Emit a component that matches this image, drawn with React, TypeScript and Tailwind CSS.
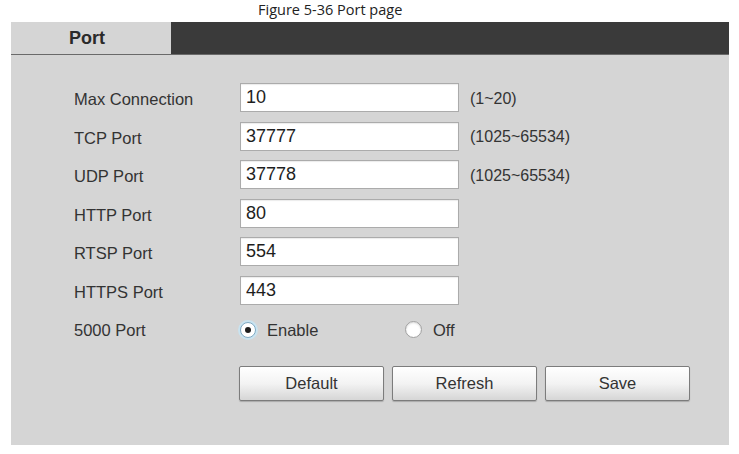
import React from "react";

type Row = { label: string; value: string; hint?: string };

const rows: Row[] = [
  { label: "Max Connection", value: "10", hint: "(1~20)" },
  { label: "TCP Port", value: "37777", hint: "(1025~65534)" },
  { label: "UDP Port", value: "37778", hint: "(1025~65534)" },
  { label: "HTTP Port", value: "80" },
  { label: "RTSP Port", value: "554" },
  { label: "HTTPS Port", value: "443" },
];

const Radio = ({ checked, label }: { checked?: boolean; label: string }) => (
  <div className="flex items-center">
    {checked ? (
      <span className="w-[16px] h-[16px] rounded-full border border-[#7fa9c2] bg-white shadow-[0_0_0_2px_#c9e3f0] flex items-center justify-center">
        <span className="w-[6px] h-[6px] rounded-full bg-[#1e1e1e]" />
      </span>
    ) : (
      <span className="w-[17px] h-[17px] rounded-full border border-[#a0a0a0] bg-white shadow-[inset_0_1px_2px_rgba(0,0,0,0.15)]" />
    )}
    <span className="ml-[11px] pt-[2px] text-[16.5px] text-[#333]">{label}</span>
  </div>
);

const Button = ({ children }: { children: React.ReactNode }) => (
  <button className="w-[145px] h-[35px] rounded-[2px] border border-[#7c7c7c] bg-gradient-to-b from-white via-[#f3f3f3] to-[#d6d6d6] shadow-[0_1px_1px_rgba(0,0,0,0.2)] text-[16.5px] text-[#333]">
    {children}
  </button>
);

export default function App() {
  return (
    <div className="w-[739px] h-[454px] bg-white font-['Liberation_Sans',Arial,sans-serif]">
      <div className="h-[22px] pl-[258px]">
        <p className="font-['Open_Sans',sans-serif] text-[14.5px] leading-[19px] text-[#222]">Figure 5-36 Port page</p>
      </div>

      <div className="ml-[11px] w-[718px] h-[423px] bg-[#d5d5d5]">
        <div className="h-[33px] flex bg-[#3a3a3a] border-b border-[#6a6a6a]">
          <div className="w-[160px] bg-[#d5d5d5] pl-[58px] flex items-center">
            <span className="text-[18px] font-bold text-[#2a2a2a]">Port</span>
          </div>
        </div>

        <div className="pt-[28px] pl-[63px]">
          <div className="flex flex-col gap-[9.5px]">
            {rows.map((r) => (
              <div key={r.label} className="flex items-center h-[29px]">
                <span className="w-[166px] pt-[4px] text-[16.5px] text-[#333]">{r.label}</span>
                <input
                  readOnly
                  value={r.value}
                  className="w-[219px] h-[29px] border border-[#ababab] bg-white px-[5px] text-[18px] text-[#1e1e1e] shadow-[inset_0_1px_1px_rgba(0,0,0,0.08)] outline-none font-['Liberation_Sans',Arial,sans-serif]"
                />
                {r.hint && <span className="ml-[11px] pt-[2px] text-[16px] text-[#333]">{r.hint}</span>}
              </div>
            ))}
            <div className="flex items-center h-[29px] mt-[1px]">
              <span className="w-[166px] pt-[2px] text-[16.5px] text-[#333]">5000 Port</span>
              <div className="w-[165px]">
                <Radio checked label="Enable" />
              </div>
              <Radio label="Off" />
            </div>
          </div>

          <div className="flex gap-[8px] mt-[22px] ml-[165px]">
            <Button>Default</Button>
            <Button>Refresh</Button>
            <Button>Save</Button>
          </div>
        </div>
      </div>
    </div>
  );
}
